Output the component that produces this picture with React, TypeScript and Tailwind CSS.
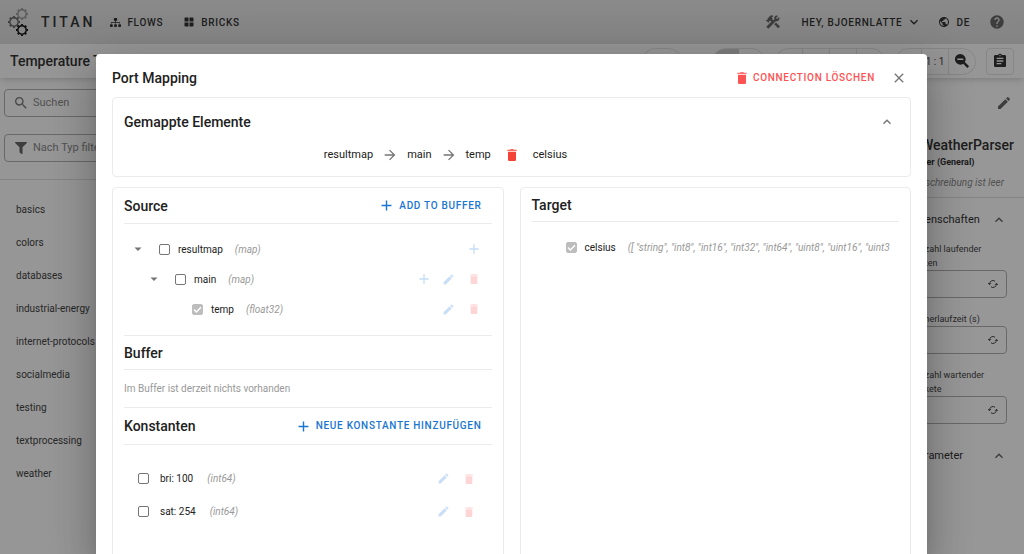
import type { ReactNode } from "react";
import { FaFilter, FaSitemap } from "react-icons/fa";
import {
  MdAdd,
  MdArrowForward,
  MdAssignment,
  MdClose,
  MdEdit,
  MdHelp,
  MdKeyboardArrowDown,
  MdKeyboardArrowUp,
  MdPublic,
  MdSearch,
  MdWindow,
} from "react-icons/md";

const categories = [
  "basics",
  "colors",
  "databases",
  "industrial-energy",
  "internet-protocols",
  "socialmedia",
  "testing",
  "textprocessing",
  "weather",
];

const constants = [
  { name: "bri: 100", type: "(int64)" },
  { name: "sat: 254", type: "(int64)" },
];

const targetType = '([ "string", "int8", "int16", "int32", "int64", "uint8", "uint16", "uint3';

const gearTeeth = [0, 45, 90, 135, 180, 225, 270, 315];

const Gear = ({ x, y, color }: { x: number; y: number; color: string }) => (
  <g transform={`translate(${x} ${y})`} stroke={color} fill="none">
    <circle r="4.2" strokeWidth="1.4" />
    {gearTeeth.map((angle) => (
      <path key={angle} d="M0 -4.6V-6" strokeWidth="1.8" transform={`rotate(${angle})`} />
    ))}
  </g>
);

const Logo = () => (
  <svg width="24" height="30" viewBox="0 0 24 30" aria-hidden="true">
    <Gear x={16} y={7} color="#9a9a9a" />
    <Gear x={8} y={15} color="#666666" />
    <Gear x={16} y={23} color="#111111" />
  </svg>
);

const ToolsIcon = () => (
  <svg className="size-4" viewBox="0 0 24 24" fill="currentColor" aria-hidden="true">
    <path d="M13.8 15.3l6 6 2.7-2.7-6-6zM17.5 11c-.5 0-1-.1-1.4-.2L5 22l-3-3 7.600-7.600-1.400-1.400-1 .9-1.200-1.200v2.700l-.9.9-3.900-3.900.9-.9h2.700L3.600 7 7.500 3.100c1.400-1.400 3.600-1.400 5 0L10.200 5.600l1.400 1.400-.8.8 1.600 1.600 1.700-1.700C13.900 7.200 13.800 6.900 13.800 6.400c0-2.300 1.700-4 3.900-4 .7 0 1.200.2 1.800.5l-3 3 1.700 1.700 3-3c.3.500.5 1.100.5 1.800 0 2.600-1.900 4.600-4.200 4.600z" />
  </svg>
);

const TrashIcon = ({ className }: { className: string }) => (
  <svg className={className} viewBox="0 0 14 18" fill="currentColor" aria-hidden="true">
    <path d="M4 1L5 0H9L10 1H14V3H0V1Z" opacity="0.8" />
    <path d="M1 4H13V16Q13 18 11 18H3Q1 18 1 16Z" />
  </svg>
);

const Caret = () => (
  <svg className="size-4 text-[#757575]" viewBox="0 0 16 16" fill="currentColor" aria-hidden="true">
    <path d="M4.5 6.5H11.5L8 10Z" />
  </svg>
);

const ZoomOutIcon = () => (
  <svg className="size-4" viewBox="0 0 16 16" fill="currentColor" aria-hidden="true">
    <path
      fillRule="evenodd"
      d="M6.3 1a5.3 5.3 0 1 0 2.9 9.7l4.1 4.3 1.8-1.7-4.3-4.2A5.3 5.3 0 0 0 6.3 1ZM3.3 5.5h6v1.6h-6Z"
    />
  </svg>
);

const RefreshIcon = () => (
  <svg className="size-2.5" viewBox="0 0 12 12" fill="none" stroke="currentColor" strokeWidth="1.2" aria-hidden="true">
    <path d="M1.8 6.5A4.2 4.2 0 0 1 8.5 2.7M10.2 5.5A4.2 4.2 0 0 1 3.5 9.3" />
    <path d="M0.2 5l1.6 1.8L3.6 5M11.8 7l-1.6-1.8L8.4 7" />
  </svg>
);

const Check = ({ id, checked = false }: { id: string; checked?: boolean }) => (
  <span className="grid size-[11px] shrink-0 place-items-center">
    <input
      id={id}
      type="checkbox"
      defaultChecked={checked}
      disabled={checked}
      className="size-[11px] appearance-none rounded-xs border border-[#757575] [grid-area:1/1] disabled:border-[#bdbdbd] disabled:bg-[#bdbdbd]"
    />
    {checked && (
      <svg
        className="pointer-events-none size-[11px] text-white [grid-area:1/1]"
        viewBox="0 0 11 11"
        fill="none"
        stroke="currentColor"
        strokeWidth="1.4"
        aria-hidden="true"
      >
        <path d="M2 5.600L4.400 8L9 3.300" />
      </svg>
    )}
  </span>
);

const RowActions = ({ add, edit = true }: { add?: boolean; edit?: boolean }) => (
  <div className="ml-auto flex items-center gap-[9px]">
    {add && (
      <button type="button" aria-label="Hinzufügen" className="text-[#c7def6]">
        <MdAdd className="size-4" />
      </button>
    )}
    {edit && (
      <>
        <button type="button" aria-label="Bearbeiten" className="flex w-4 justify-center text-[#c7def6]">
          <MdEdit className="size-[13px]" />
        </button>
        <button type="button" aria-label="Löschen" className="flex w-4 justify-center text-[#fdd5d5]">
          <TrashIcon className="h-2.5 w-2" />
        </button>
      </>
    )}
  </div>
);

const TextButton = ({ children }: { children: ReactNode }) => (
  <button
    type="button"
    className="flex items-center gap-1 pr-2.5 text-[10px] leading-4 font-medium tracking-[0.07em] text-[#1976d2]"
  >
    <MdAdd className="size-[17px]" />
    {children}
  </button>
);

const PanelTitle = ({ children }: { children: ReactNode }) => (
  <h3 className="text-sm font-medium">{children}</h3>
);

const NumberField = ({ id, label }: { id: string; label: string }) => (
  <div>
    <label htmlFor={id} className="block pr-4 pl-1 text-[9px] leading-[14px] text-[#444]">
      {label}
    </label>
    <div className="flex h-[28px] items-center rounded-sm border border-[#b0b0b0] pr-2">
      <input id={id} type="text" className="min-w-0 flex-1 bg-transparent px-2 text-[11px] outline-none" />
      <button type="button" aria-label="Aktualisieren" className="text-[#444]">
        <RefreshIcon />
      </button>
    </div>
  </div>
);

const TopBar = () => (
  <header className="flex h-11 items-center bg-linear-to-b from-[#e6e6e6] to-[#dcdcdc] pr-[19px] pl-1.5 text-[10px] font-medium tracking-[0.07em] text-[#333]">
    <Logo />
    <span className="ml-[11px] text-sm tracking-[3px]">TITAN</span>
    <nav className="ml-[15px] flex items-center gap-5">
      <a href="#flows" className="flex items-center gap-1.5">
        <FaSitemap className="size-[11px]" />
        FLOWS
      </a>
      <a href="#bricks" className="flex items-center gap-1.5">
        <MdWindow className="size-3" />
        BRICKS
      </a>
    </nav>
    <div className="ml-auto flex items-center">
      <button type="button" aria-label="Werkzeuge" className="text-[#666]">
        <ToolsIcon />
      </button>
      <button type="button" className="ml-5 flex items-center gap-1">
        HEY, BJOERNLATTE
        <MdKeyboardArrowDown className="size-4" />
      </button>
      <button type="button" className="ml-4 flex items-center gap-1.5">
        <MdPublic className="size-3" />
        DE
      </button>
      <button type="button" aria-label="Hilfe" className="ml-[19px] text-[#666]">
        <MdHelp className="size-4" />
      </button>
    </div>
  </header>
);

const FlowBar = () => (
  <div className="relative flex h-[34px] items-center bg-[#fafafa] px-2.5 shadow-md">
    <h1 className="text-sm font-medium">Temperature Transfer</h1>
    <div className="ml-auto flex h-[27px] items-stretch gap-2.5 text-[10px] text-[#444]">
      <div className="mr-5 w-10 rounded-full border border-[#e0e0e0]" />
      <div className="flex w-[53px] overflow-hidden rounded-full border border-[#e0e0e0]">
        <div className="w-1/2 bg-[#cfcfcf]" />
      </div>
      <div className="grid w-[110px] grid-cols-4 divide-x divide-[#e0e0e0] rounded-full border border-[#e0e0e0]">
        <span />
        <span />
        <span />
        <span />
      </div>
      <div className="grid w-[81px] grid-cols-3 divide-x divide-[#e0e0e0] rounded-full border border-[#e0e0e0]">
        <span />
        <button type="button">1 : 1</button>
        <button type="button" aria-label="Verkleinern" className="grid place-items-center text-[#333]">
          <ZoomOutIcon />
        </button>
      </div>
      <button
        type="button"
        aria-label="Protokoll"
        className="grid w-[28px] place-items-center rounded-sm border border-[#e0e0e0] text-[#333]"
      >
        <MdAssignment className="size-4" />
      </button>
    </div>
  </div>
);

const Sidebar = () => (
  <aside className="w-[220px] shrink-0 text-[11px] text-[#444]">
    <div className="flex flex-col gap-[17px] border-b border-[#dcdcdc] px-1 pt-[11px] pb-[17px]">
      <label className="flex h-[28px] items-center gap-1 rounded-sm border border-[#b0b0b0] px-2 text-[#777]">
        <MdSearch className="size-4" />
        <input
          type="text"
          aria-label="Suchen"
          placeholder="Suchen"
          className="min-w-0 flex-1 outline-none placeholder:text-[#888]"
        />
      </label>
      <label className="flex h-[28px] items-center gap-1 rounded-sm border border-[#b0b0b0] px-2 text-[#777]">
        <span className="grid w-4 place-items-center text-[#666]">
          <FaFilter className="size-3" />
        </span>
        <input
          type="text"
          aria-label="Nach Typ filtern"
          placeholder="Nach Typ filtern"
          className="min-w-0 flex-1 outline-none placeholder:text-[#888]"
        />
      </label>
    </div>
    <ul className="pt-[13px] pl-4 text-[10px]">
      {categories.map((category) => (
        <li key={category} className="flex h-[33px] items-center">
          {category}
        </li>
      ))}
    </ul>
  </aside>
);

const Inspector = () => (
  <aside className="w-[124px] shrink-0 bg-[#fcfcfc] pt-[17px] text-[#333]">
    <button type="button" aria-label="Brick bearbeiten" className="mr-3 ml-auto block text-[#666]">
      <MdEdit className="size-4" />
    </button>
    <div className="mt-6 border-b border-[#dcdcdc] pr-2.5 pb-1.5">
      <h2 className="flex justify-end text-sm font-medium">WeatherParser</h2>
      <p className="pl-2 text-[9px] leading-[14px] font-bold">Parser (General)</p>
      <p className="mt-1.5 flex justify-end pr-2.5 text-[10px] leading-4 whitespace-nowrap text-[#888] italic">
        Beschreibung ist leer
      </p>
    </div>
    <div className="pr-[17px] pl-2.5">
      <div className="flex h-11 items-center justify-between text-[11px]">
        Eigenschaften
        <MdKeyboardArrowUp className="size-4 text-[#666]" />
      </div>
      <div className="flex flex-col gap-3.5">
        <NumberField id="instances" label="Anzahl laufender Daten" />
        <NumberField id="runtime" label="Timerlaufzeit (s)" />
        <NumberField id="packets" label="Anzahl wartender Pakete" />
      </div>
      <div className="mt-2.5 flex h-11 items-center justify-between pl-0.5 text-[11px]">
        Parameter
        <MdKeyboardArrowUp className="size-4 text-[#666]" />
      </div>
    </div>
  </aside>
);

const MappedElements = () => (
  <section className="rounded-sm border border-[#ebebeb] px-[11px] pt-3 pb-[11px]">
    <div className="flex h-6 items-center justify-between">
      <PanelTitle>Gemappte Elemente</PanelTitle>
      <button type="button" aria-label="Einklappen" className="mr-1 text-[#757575]">
        <MdKeyboardArrowUp className="size-4" />
      </button>
    </div>
    <div className="mt-[11px] flex h-5 items-center justify-center pr-[132px] text-[11px]">
      <span>resultmap</span>
      <MdArrowForward className="mx-[9px] size-4 text-[#757575]" />
      <span>main</span>
      <MdArrowForward className="mx-[9px] size-4 text-[#757575]" />
      <span>temp</span>
      <button type="button" aria-label="Mapping löschen" className="mx-4 text-[#f44336]">
        <TrashIcon className="h-3 w-2.5" />
      </button>
      <span>celsius</span>
    </div>
  </section>
);

const SourcePanel = () => (
  <section className="min-w-0 rounded-sm border border-[#ebebeb] px-[11px] pb-10">
    <div className="flex h-9 items-center justify-between border-b border-[#ebebeb]">
      <PanelTitle>Source</PanelTitle>
      <TextButton>ADD TO BUFFER</TextButton>
    </div>

    <div className="border-b border-[#ebebeb] pt-2.5 pr-2.5 pb-[11px] pl-1.5 text-[10px]">
      <div className="flex h-[30px] items-center">
        <Caret />
        <span className="w-[13px]" />
        <Check id="resultmap" />
        <label htmlFor="resultmap" className="ml-2">resultmap</label>
        <em className="ml-3 text-[#999]">(map)</em>
        <RowActions add edit={false} />
      </div>
      <div className="flex h-[30px] items-center pl-4">
        <Caret />
        <span className="w-[13px]" />
        <Check id="main" />
        <label htmlFor="main" className="ml-2">main</label>
        <em className="ml-3 text-[#999]">(map)</em>
        <RowActions add />
      </div>
      <div className="flex h-[30px] items-center pl-[62px]">
        <Check id="temp" checked />
        <label htmlFor="temp" className="ml-2">temp</label>
        <em className="ml-3 text-[#999]">(float32)</em>
        <RowActions />
      </div>
    </div>

    <div className="flex h-[34px] items-center border-b border-[#ebebeb]">
      <PanelTitle>Buffer</PanelTitle>
    </div>
    <p className="flex h-[38px] items-center border-b border-[#ebebeb] text-[10px] text-[#999]">
      Im Buffer ist derzeit nichts vorhanden
    </p>

    <div className="flex h-[37px] items-center justify-between border-b border-[#ebebeb]">
      <PanelTitle>Konstanten</PanelTitle>
      <TextButton>NEUE KONSTANTE HINZUFÜGEN</TextButton>
    </div>
    <ul className="pt-[17px] pr-[15px] pl-3.5 text-[10px]">
      {constants.map(({ name, type }) => (
        <li key={name} className="flex h-[33px] items-center">
          <Check id={name} />
          <label htmlFor={name} className="ml-[11px]">{name}</label>
          <em className="ml-3.5 text-[#999]">{type}</em>
          <RowActions />
        </li>
      ))}
    </ul>
  </section>
);

const TargetPanel = () => (
  <section className="min-w-0 rounded-sm border border-[#ebebeb] px-[11px]">
    <div className="flex h-[34px] items-center border-b border-[#ebebeb]">
      <PanelTitle>Target</PanelTitle>
    </div>
    <div className="flex h-[50px] items-center pr-1 pl-[34px] text-[10px]">
      <Check id="celsius" checked />
      <label htmlFor="celsius" className="ml-2">celsius</label>
      <em className="ml-3 min-w-0 overflow-hidden whitespace-nowrap text-[#999]">{targetType}</em>
    </div>
  </section>
);

const PortMappingDialog = () => (
  <div
    role="dialog"
    aria-label="Port Mapping"
    className="flex w-full flex-col gap-2.5 rounded-t-sm bg-white px-4 text-[#212121] shadow-[0_11px_15px_-7px_rgba(0,0,0,0.2),0_24px_38px_3px_rgba(0,0,0,0.14),0_9px_46px_8px_rgba(0,0,0,0.12)]"
  >
    <div className="flex h-[33px] items-center pt-3.5">
      <h2 className="text-sm font-medium">Port Mapping</h2>
      <button
        type="button"
        className="ml-auto flex items-center gap-1.5 text-[10px] leading-4 font-medium tracking-[0.07em] text-[#ff5252]"
      >
        <TrashIcon className="h-3 w-2.5" />
        CONNECTION LÖSCHEN
      </button>
      <button type="button" aria-label="Schließen" className="mr-1 ml-4 text-[#757575]">
        <MdClose className="size-4" />
      </button>
    </div>
    <MappedElements />
    <div className="grid flex-1 grid-cols-2 gap-4">
      <SourcePanel />
      <TargetPanel />
    </div>
  </div>
);

export default function App() {
  return (
    <div className="relative flex h-screen flex-col overflow-hidden bg-[#fafafa] font-[Roboto,sans-serif] text-[#333]">
      <TopBar />
      <FlowBar />
      <div className="flex flex-1 justify-between">
        <Sidebar />
        <Inspector />
      </div>

      <div className="absolute inset-0 flex bg-black/40 pt-[54px] pr-[97px] pl-24">
        <PortMappingDialog />
      </div>
    </div>
  );
}
